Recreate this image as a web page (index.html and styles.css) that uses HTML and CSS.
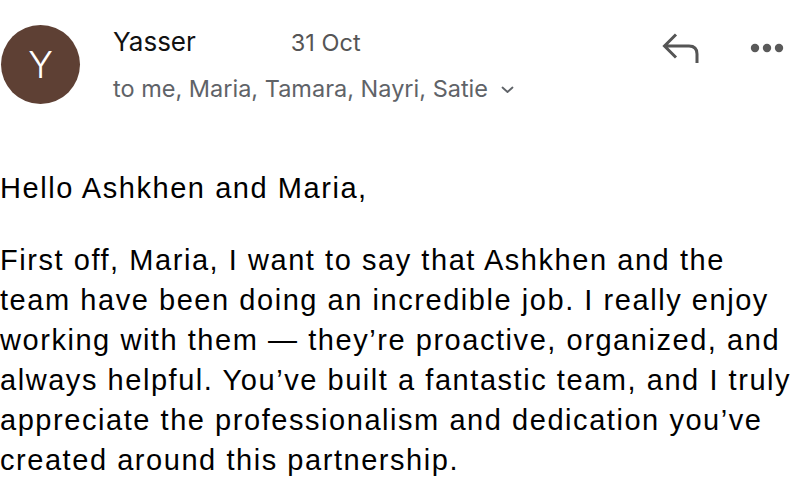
FILE: index.html
```html
<!DOCTYPE html>
<html lang="en">
<head>
<meta charset="utf-8">
<title>Mail</title>
<link rel="stylesheet" href="styles.css">
</head>
<body>
<div class="mail">
  <header class="head">
    <div class="avatar">Y</div>
    <div class="meta">
      <div class="row1"><span class="name">Yasser</span><span class="date">31 Oct</span></div>
      <div class="to">to me, Maria, Tamara, Nayri, Satie
        <svg class="chev" width="13" height="8" viewBox="0 0 13 8"><path d="M1.5 1.5 L6.5 6 L11.5 1.5" fill="none" stroke="#5f6368" stroke-width="1.8" stroke-linecap="round" stroke-linejoin="round"/></svg>
      </div>
    </div>
    <div class="actions">
      <svg class="reply" width="38" height="32" viewBox="0 0 38 32"><path d="M14 1.5 L2.5 13 L14 24.5 M2.5 13 H27 Q35 13 35 21 V30" fill="none" stroke="#555" stroke-width="3"/></svg>
      <svg class="more" width="34" height="10" viewBox="0 0 34 10"><circle cx="5" cy="5" r="4.2" fill="#5a5a5a"/><circle cx="17" cy="5" r="4.2" fill="#5a5a5a"/><circle cx="29" cy="5" r="4.2" fill="#5a5a5a"/></svg>
    </div>
  </header>
  <div class="body">
    <p>Hello Ashkhen and Maria,</p>
    <p>First off, Maria, I want to say that Ashkhen and the team have been doing an incredible job. I really enjoy working with them — they’re proactive, organized, and always helpful. You’ve built a fantastic team, and I truly appreciate the professionalism and dedication you’ve created around this partnership.</p>
  </div>
</div>
</body>
</html>
```
FILE: styles.css
```css
html, body {
  margin: 0;
  padding: 0;
  background: #ffffff;
}
.mail {
  width: 795px;
  height: 495px;
  overflow: hidden;
}
.head {
  display: flex;
  align-items: flex-start;
  padding: 25px 11px 0 1px;
}
.avatar {
  width: 79px;
  height: 79px;
  border-radius: 50%;
  background: #5e4034;
  color: #ffffff;
  font-family: Inter, "Noto Sans", sans-serif;
  font-size: 37px;
  font-weight: 300;
  display: flex;
  align-items: center;
  justify-content: center;
  flex-shrink: 0;
}
.meta {
  margin-left: 33px;
  margin-top: 1px;
  font-family: Inter, "Noto Sans", sans-serif;
}
.row1 {
  display: flex;
  align-items: baseline;
  line-height: 32px;
}
.name {
  font-size: 26px;
  color: #111;
}
.date {
  font-size: 23.5px;
  color: #555;
  margin-left: 95px;
}
.to {
  margin-top: 16px;
  font-size: 23.5px;
  line-height: 28px;
  color: #5f6368;
  display: flex;
  align-items: center;
  gap: 13px;
  white-space: nowrap;
}
.chev {
  margin-top: 2px;
}
.actions {
  margin-left: auto;
  display: flex;
  align-items: flex-start;
  gap: 50px;
}
.reply {
  margin-top: 8px;
}
.more {
  margin-top: 18px;
}
.body {
  margin-top: 64px;
  font-family: "Liberation Sans", Arial, sans-serif;
  font-size: 29px;
  letter-spacing: 1.55px;
  line-height: 40px;
  color: #000;
}
.body p {
  margin: 0 0 32px 0;
}
```
